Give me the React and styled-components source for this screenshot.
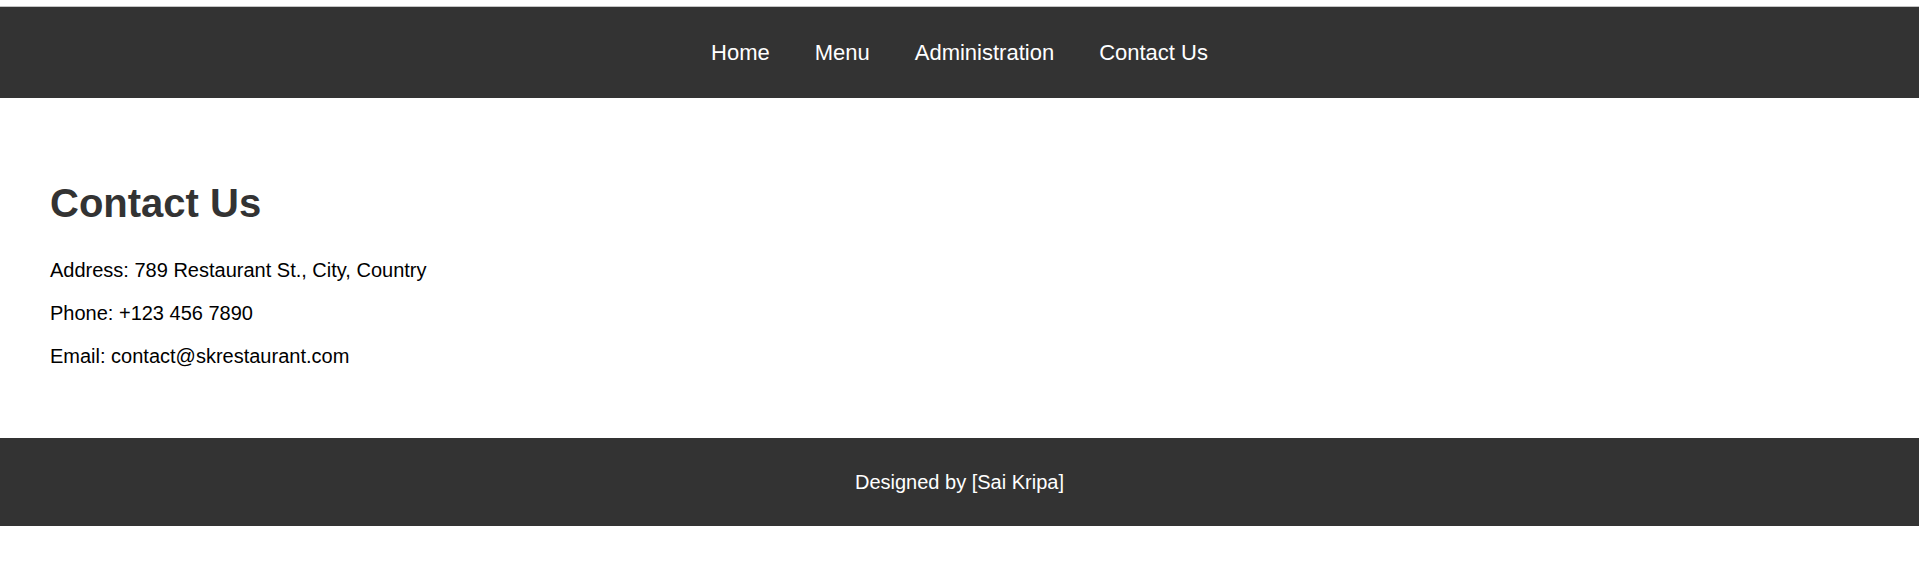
import React from "react";
import styled, { createGlobalStyle } from "styled-components";

const GlobalStyle = createGlobalStyle`
  html, body {
    margin: 0;
    padding: 0;
    background: #fff;
  }
  body {
    font-family: "Liberation Sans", Arial, sans-serif;
    color: #000;
  }
`;

const Page = styled.div`
  padding-top: 6px;
`;

const Header = styled.header`
  background: #333;
  border-top: 1px solid #c4c4c4;
  padding: 33px 0;
`;

const NavList = styled.ul`
  list-style: none;
  margin: 0;
  padding: 0;
  display: flex;
  justify-content: center;
  gap: 45px;
`;

const NavLink = styled.a`
  color: #fff;
  text-decoration: none;
  font-size: 22px;
  line-height: 25px;
  display: block;
  &:hover {
    text-decoration: underline;
  }
`;

const Main = styled.main`
  padding: 55px 50px 50px;
`;

const Title = styled.h1`
  color: #333;
  font-size: 40px;
  line-height: 46px;
  font-weight: bold;
  margin: 27px 0 33px;
`;

const Line = styled.p`
  font-size: 20px;
  line-height: 23px;
  margin: 20px 0;
`;

const Footer = styled.footer`
  background: #333;
  color: #fff;
  text-align: center;
  padding: 33px 0;
  font-size: 20px;
  line-height: 22px;
`;

const Tail = styled.div`
  height: 52px;
`;

const links = ["Home", "Menu", "Administration", "Contact Us"];

export default function App() {
  return (
    <>
      <GlobalStyle />
      <Page>
        <Header>
          <nav>
            <NavList>
              {links.map((l) => (
                <li key={l}>
                  <NavLink href="#">{l}</NavLink>
                </li>
              ))}
            </NavList>
          </nav>
        </Header>
        <Main>
          <Title>Contact Us</Title>
          <Line>Address: 789 Restaurant St., City, Country</Line>
          <Line>Phone: +123 456 7890</Line>
          <Line>Email: contact@skrestaurant.com</Line>
        </Main>
        <Footer>Designed by [Sai Kripa]</Footer>
        <Tail />
      </Page>
    </>
  );
}
